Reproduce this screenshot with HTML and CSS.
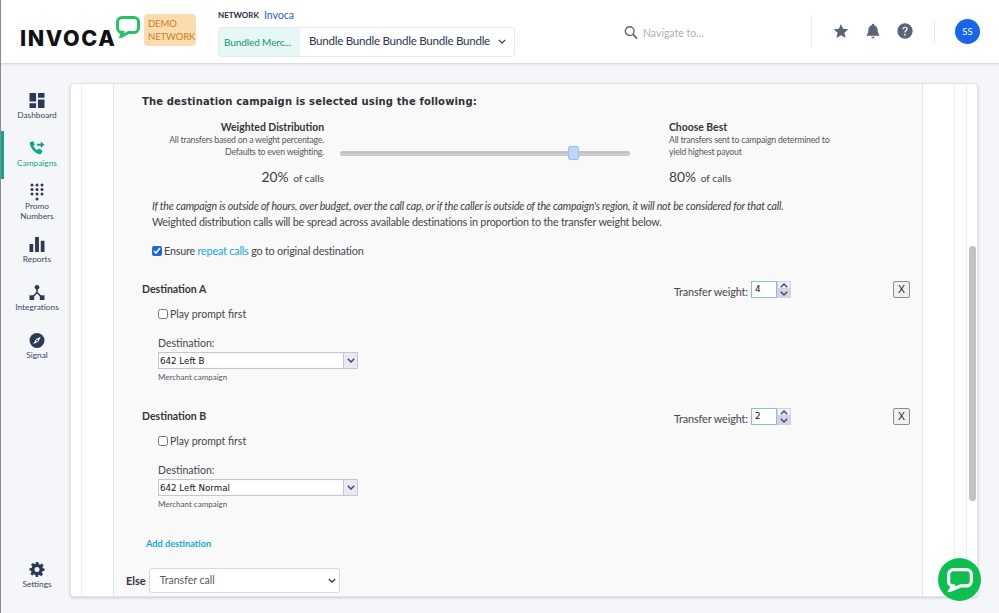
FILE: index.html
```html
<!DOCTYPE html>
<html lang="en">
<head>
<meta charset="utf-8">
<title>Invoca</title>
<link rel="stylesheet" href="styles.css">
</head>
<body>
<header class="topbar">
  <div class="logo">
    <span class="logo-text">INVOCA</span>
    <svg class="logo-bubble" viewBox="0 0 24 22"><path d="M6 1.500h12a4.500 4.500 0 0 1 4.500 4.500v6a4.500 4.500 0 0 1-4.500 4.500h-5.500L5 20.500l1.500-4A4.500 4.500 0 0 1 1.500 12V6A4.500 4.500 0 0 1 6 1.500z" fill="none" stroke="#27c16a" stroke-width="3"/></svg>
  </div>
  <div class="demo">DEMO NETWORK</div>
  <div class="network">
    <div class="network-line"><b>NETWORK</b><a>Invoca</a></div>
    <div class="bundle">
      <span class="bundle-tag">Bundled Merc...</span>
      <span class="bundle-name">Bundle Bundle Bundle Bundle Bundle</span>
      <svg class="bundle-chevron" viewBox="0 0 10 6"><path d="M1 1l4 4 4-4" fill="none" stroke="#2a3550" stroke-width="1.500"/></svg>
    </div>
  </div>
  <div class="search">
    <svg viewBox="0 0 16 16"><circle cx="6.500" cy="6.500" r="5" fill="none" stroke="#5b6577" stroke-width="1.600"/><path d="M10.200 10.200L15 15" stroke="#5b6577" stroke-width="1.900"/></svg>
    <span>Navigate to...</span>
  </div>
  <div class="tools">
    <svg class="tool" viewBox="0 0 24 24"><path d="M12 1.500l3.200 7.300 7.800.7-5.900 5.200 1.800 7.800L12 18.400l-6.900 4.100 1.800-7.800L1 9.500l7.800-.7z" fill="#5b6577"/></svg>
    <svg class="tool" viewBox="0 0 24 24"><path d="M12 1a2 2 0 0 1 2 2v.400c3.200 1 5 3.800 5 7.100 0 4 1 5.500 2.500 7V19h-19v-1.500C4 16 5 14.500 5 10.500c0-3.300 1.800-6.100 5-7.100V3a2 2 0 0 1 2-2z M9.500 20.500h5a2.500 2.500 0 0 1-5 0z" fill="#5b6577"/></svg>
    <svg class="tool" viewBox="0 0 24 24"><circle cx="12" cy="12" r="11.500" fill="#5b6577"/><path d="M8 9.200c0-2.300 1.800-3.700 4-3.700s4 1.300 4 3.400c0 2.800-3.200 2.900-3.200 5.400h-1.900c0-3.400 3-3.400 3-5.300 0-1-.8-1.700-1.900-1.700s-2 .7-2.100 1.900z" fill="#fff"/><circle cx="11.900" cy="17.500" r="1.300" fill="#fff"/></svg>
  </div>
  <div class="divider"></div>
  <div class="avatar">SS</div>
</header>

<div class="main">
  <nav class="sidebar">
    <a class="nav-item">
      <svg viewBox="0 0 16 16"><path d="M0 0h7v9H0zM9 0h7v5H9zM9 7h7v9H9zM0 11h7v5H0z" fill="#2d3a55"/></svg>
      <span>Dashboard</span>
    </a>
    <a class="nav-item active">
      <svg viewBox="0 0 16 16"><path d="M1 1l3-.800 1.800 3.700-1.600 1.400c.8 2 2.300 3.500 4.300 4.400l1.500-1.600 3.700 1.800-.7 3c-.2.800-1 1.300-2 1.100C5.500 12.800 1.600 8.500.4 2.800.2 2 .4 1.200 1 1z" fill="#12a587"/><path d="M8 3h4V.500L16 4l-4 3.500V5H8z" fill="#12a587"/></svg>
      <span>Campaigns</span>
    </a>
    <a class="nav-item tall">
      <svg viewBox="0 0 14 18"><g fill="#2d3a55"><circle cx="2" cy="2" r="1.500"/><circle cx="7" cy="2" r="1.500"/><circle cx="12" cy="2" r="1.500"/><circle cx="2" cy="6.500" r="1.500"/><circle cx="7" cy="6.500" r="1.500"/><circle cx="12" cy="6.500" r="1.500"/><circle cx="2" cy="11" r="1.500"/><circle cx="7" cy="11" r="1.500"/><circle cx="12" cy="11" r="1.500"/><circle cx="7" cy="16" r="1.500"/></g></svg>
      <span>Promo<br>Numbers</span>
    </a>
    <a class="nav-item">
      <svg viewBox="0 0 14 14"><path d="M0 6.500h3.500V14H0zM5.200 0h3.600v14H5.200zM10.500 3.500H14V14h-3.500z" fill="#2d3a55"/></svg>
      <span>Reports</span>
    </a>
    <a class="nav-item">
      <svg viewBox="0 0 16 16"><g fill="#2d3a55"><circle cx="8" cy="2.500" r="2.500"/><rect x="0" y="11" width="5" height="5"/><rect x="11" y="11" width="5" height="5"/></g><path d="M8 3v5M8 8l-5 5M8 8l5 5" stroke="#2d3a55" stroke-width="1.600" fill="none"/></svg>
      <span>Integrations</span>
    </a>
    <a class="nav-item">
      <svg viewBox="0 0 16 16"><circle cx="8" cy="8" r="8" fill="#2d3a55"/><path d="M12 4L9.300 9.300 4 12l2.700-5.300z" fill="#fff"/><circle cx="8" cy="8" r="1" fill="#2d3a55"/></svg>
      <span>Signal</span>
    </a>
    <a class="nav-item settings">
      <svg viewBox="0 0 24 24"><path d="M10 0h4l.6 3.300 2.300 1 2.800-1.900 2.900 2.900-1.900 2.800 1 2.300L24 10v4l-3.300.6-1 2.300 1.900 2.800-2.900 2.900-2.800-1.900-2.300 1L14 24h-4l-.6-3.300-2.300-1-2.800 1.900-2.900-2.900 1.900-2.800-1-2.300L0 14v-4l3.300-.6 1-2.300-1.900-2.800 2.900-2.900 2.800 1.900 2.300-1zM12 8a4 4 0 1 0 0 8 4 4 0 0 0 0-8z" fill="#2d3a55" fill-rule="evenodd"/></svg>
      <span>Settings</span>
    </a>
  </nav>

  <section class="card">
    <div class="rail-a"></div>
    <div class="rail-b"></div>
    <div class="panel">
      <h2>The destination campaign is selected using the following:</h2>
      <div class="split">
        <div class="split-left">
          <h3>Weighted Distribution</h3>
          <p>All transfers based on a weight percentage.<br>Defaults to even weighting.</p>
          <div class="pct"><strong>20%</strong> of calls</div>
        </div>
        <div class="slider"><div class="track"><div class="handle"></div></div></div>
        <div class="split-right">
          <h3>Choose Best</h3>
          <p>All transfers sent to campaign determined to<br>yield highest payout</p>
          <div class="pct"><strong>80%</strong> of calls</div>
        </div>
      </div>
      <div class="notes">
        <p class="note-italic">If the campaign is outside of hours, over budget, over the call cap, or if the caller is outside of the campaign's region, it will not be considered for that call.</p>
        <p>Weighted distribution calls will be spread across available destinations in proportion to the transfer weight below.</p>
      </div>
      <label class="ensure"><input type="checkbox" checked> <span>Ensure <a>repeat calls</a> go to original destination</span></label>

      <div class="dest">
        <div class="dest-main">
          <h4>Destination A</h4>
          <label class="prompt"><input type="checkbox"> <span>Play prompt first</span></label>
          <div class="dest-label">Destination:</div>
          <div class="combo"><span class="combo-value">642 Left B</span><span class="combo-btn"><svg viewBox="0 0 8 5"><path d="M.8.800L4 4l3.200-3.200" fill="none" stroke="#2b4c8c" stroke-width="1.500"/></svg></span></div>
          <div class="hint">Merchant campaign</div>
        </div>
        <div class="weight">
          <span>Transfer weight:</span>
          <span class="num">4</span>
          <span class="spin"><i><svg viewBox="0 0 8 5"><path d="M.8 4.200L4 1l3.200 3.200" fill="none" stroke="#2b4c8c" stroke-width="1.400"/></svg></i><i class="down"><svg viewBox="0 0 8 5"><path d="M.8.800L4 4l3.200-3.200" fill="none" stroke="#2b4c8c" stroke-width="1.400"/></svg></i></span>
        </div>
        <button class="remove" type="button">X</button>
      </div>

      <div class="dest dest-b">
        <div class="dest-main">
          <h4>Destination B</h4>
          <label class="prompt"><input type="checkbox"> <span>Play prompt first</span></label>
          <div class="dest-label">Destination:</div>
          <div class="combo"><span class="combo-value">642 Left Normal</span><span class="combo-btn"><svg viewBox="0 0 8 5"><path d="M.8.800L4 4l3.200-3.200" fill="none" stroke="#2b4c8c" stroke-width="1.500"/></svg></span></div>
          <div class="hint">Merchant campaign</div>
        </div>
        <div class="weight">
          <span>Transfer weight:</span>
          <span class="num">2</span>
          <span class="spin"><i><svg viewBox="0 0 8 5"><path d="M.8 4.200L4 1l3.200 3.200" fill="none" stroke="#2b4c8c" stroke-width="1.400"/></svg></i><i class="down"><svg viewBox="0 0 8 5"><path d="M.8.800L4 4l3.200-3.200" fill="none" stroke="#2b4c8c" stroke-width="1.400"/></svg></i></span>
        </div>
        <button class="remove" type="button">X</button>
      </div>

      <a class="add">Add destination</a>
      <div class="else">
        <b>Else</b>
        <div class="select"><span>Transfer call</span><svg viewBox="0 0 10 6"><path d="M1 1l4 4 4-4" fill="none" stroke="#3a4252" stroke-width="1.700"/></svg></div>
      </div>
    </div>
    <div class="rail-c"></div>
    <div class="scroll"><div class="thumb"></div></div>
  </section>
</div>

<a class="chat">
  <svg viewBox="0 0 24 22"><path d="M6 1.500h12a4.500 4.500 0 0 1 4.500 4.500v6a4.500 4.500 0 0 1-4.500 4.500h-5.500L3 20.500l2.500-4A4.500 4.500 0 0 1 1.500 12V6A4.500 4.500 0 0 1 6 1.500z" fill="none" stroke="#fff" stroke-width="3"/></svg>
</a>
</body>
</html>
```
FILE: styles.css
```css
* { box-sizing: border-box; }
html, body { margin: 0; height: 613px; overflow: hidden; }
body {
  font-family: Lato, "Liberation Sans", sans-serif;
  color: #3b3f47;
  background: #f4f6fa;
  border-left: 1px solid #8a8a8a;
}
h2, h3, h4, p { margin: 0; }

.topbar {
  height: 64px;
  background: #fff;
  border-bottom: 1px solid #d9dbe0;
  box-shadow: 0 1px 2px rgba(0,0,0,.08);
  display: flex;
  align-items: flex-start;
  padding-left: 19px;
  position: relative;
  z-index: 2;
}
.logo { width: 124px; height: 46px; margin-top: 14px; display: flex; align-items: flex-start; flex: none; }
.logo-text {
  font-family: Inter, "Liberation Sans", sans-serif;
  font-weight: 800;
  font-size: 21.5px;
  letter-spacing: 1.6px;
  color: #111;
  line-height: 20px;
  margin-top: 14px;
}
.logo-bubble { width: 24px; height: 22px; margin-top: 2px; }
.demo {
  width: 52px; height: 32px; margin-top: 14px; flex: none;
  background: #fcdcae; border-radius: 4px;
  color: #c4801f; font-size: 9.500px; letter-spacing: -.1px; line-height: 13px;
  padding: 3px 0 0 4px;
}
.network { margin-left: 22px; width: 297px; margin-top: 7px; flex: none; }
.network-line { height: 16px; margin-bottom: 4px; display: flex; align-items: center; gap: 5px; }
.network-line b { font-size: 8px; color: #1e2a44; font-weight: 700; }
.network-line a { font-size: 10.500px; color: #1a5fe0; }
.bundle {
  height: 30px; display: flex; align-items: center;
  border: 1px solid #e8eaee; border-radius: 3px;
}
.bundle-tag {
  width: 81px; height: 100%; background: #e6f8f5; color: #1d8d78; flex: none; white-space: nowrap;
  font-size: 10px; letter-spacing: -.1px; display: flex; align-items: center; padding: 0 0 1px 5px;
}
.bundle-name { margin: 0 0 3px 9px; font-size: 11.600px; letter-spacing: -.27px; color: #2a3550; white-space: nowrap; }
.bundle-chevron { width: 8px; height: 5px; margin: 0 0 2px 8px; flex: none; }
.search { margin-left: 109px; margin-top: 25px; display: flex; align-items: center; gap: 5px; width: 187px; height: 15px; flex: none; }
.search svg { width: 14px; height: 15px; }
.search span { font-size: 10.500px; color: #a9b0bb; }
.tools {
  height: 32px; margin-top: 15px; padding-left: 21px; flex: none;
  border-left: 1px solid #e8eaee; display: flex; align-items: center; gap: 16px; width: 123px;
}
.tool { width: 16px; height: 16px; flex: none; }
.divider { width: 1px; height: 24px; margin-top: 20px; background: #e8eaee; flex: none; }
.avatar {
  width: 25px; height: 25px; border-radius: 50%; background: #1765e8; color: #fff; flex: none;
  font-size: 9.500px; display: flex; align-items: center; justify-content: center;
  margin-top: 19px; margin-left: 20px;
}

.main { display: flex; height: 549px; }
.sidebar { width: 69px; display: flex; flex-direction: column; padding-top: 19px; flex: none; }
.nav-item {
  height: 48px; display: flex; flex-direction: column; align-items: center; padding-top: 10px;
  color: #3d4860; font-size: 8.300px; line-height: 9.500px; text-align: center; gap: 3px; flex: none;
  border-left: 3px solid transparent;
}
.nav-item svg { width: 16px; height: 15px; flex: none; }
.nav-item.tall { padding-top: 4px; gap: 1px; }
.nav-item.tall svg { height: 18px; }
.nav-item.active { color: #12a587; border-left-color: #12a587; }
.nav-item.settings { margin-top: auto; margin-bottom: 13px; }

.card {
  width: 908px; height: 514px; margin-top: 19px; background: #fff;
  border: 1px solid #e3e4e7; border-radius: 4px; box-shadow: 0 1px 3px rgba(0,0,0,.18);
  display: flex; overflow: hidden; flex: none;
}
.rail-a { width: 11px; border-right: 1px solid #ececec; flex: none; }
.rail-b { width: 32px; border-right: 1px solid #e4e4e4; flex: none; }
.panel { width: 808px; flex: none; background: #f9f9f9; padding: 10px 0 0 28px; }
.panel h2 {
  font-family: "DejaVu Sans", Verdana, sans-serif;
  font-size: 10px; font-weight: 700; color: #2e3238; line-height: 16px; letter-spacing: .15px;
}
.split { display: flex; margin-top: 10px; }
.split-left { width: 182px; text-align: right; flex: none; }
.split-right { width: 180px; margin-left: 39px; flex: none; }
.split h3 { font-size: 10.400px; font-weight: 700; color: #33363c; line-height: 14px; }
.split p { font-size: 8.700px; letter-spacing: -.2px; line-height: 12.400px; color: #55585e; }
.pct { font-size: 10.200px; color: #44474d; margin-top: 8px; line-height: 20px; }
.pct strong { font-weight: 400; font-size: 13.800px; color: #3b3e44; margin-right: 2px; }
.slider { width: 290px; margin-left: 16px; padding-top: 31px; flex: none; }
.track {
  height: 5px; border: 1px solid #c4c4c4; border-radius: 2px; position: relative;
  background: linear-gradient(#bdbdbd, #d6d6d6);
}
.handle {
  position: absolute; left: 227px; top: -6px; width: 11px; height: 14px;
  background: #bcd6fb; border: 1px solid #9cc0f2; border-radius: 2px;
}
.notes { margin: 11px 0 0 10px; font-size: 10.800px; letter-spacing: -.21px; line-height: 15px; color: #44474d; }
.note-italic { font-style: italic; font-size: 10.600px; letter-spacing: -.2px; color: #3b3e44; }
.ensure { display: flex; align-items: center; margin: 14px 0 0 10px; font-size: 10.800px; letter-spacing: -.2px; color: #44474d; height: 16px; }
.ensure a { color: #18a4e8; }
input[type=checkbox] { margin: 0 2px 0 0; width: 10px; height: 10px; accent-color: #1a6be0; flex: none; }
.dest { display: flex; align-items: flex-start; height: 127px; margin-top: 23px; }
.dest-b { margin-top: 0; }
.dest-main { width: 532px; flex: none; }
.dest h4 { font-size: 10.500px; font-weight: 700; color: #33363c; line-height: 14px; }
.prompt { display: flex; align-items: center; margin: 11px 0 0 16px; font-size: 10.500px; color: #44474d; height: 14px; }
.dest-label { margin: 15px 0 0 16px; font-size: 10.500px; line-height: 14px; color: #44474d; }
.combo {
  margin: 2px 0 0 16px; width: 200px; height: 17px; display: flex;
  border: 1px solid #c3c6d6; background: #fff; box-shadow: inset 0 0 1px #ccc;
}
.combo-value { flex: 1; font-family: "DejaVu Sans", sans-serif; font-size: 8.700px; line-height: 16px; color: #111; padding-left: 1px; }
.combo-btn { width: 14px; background: #e9e9ef; border-left: 1px solid #c3c6d6; display: flex; align-items: center; justify-content: center; }
.combo-btn svg { width: 8px; height: 5px; }
.hint { margin: 3px 0 0 16px; font-size: 8px; line-height: 10px; color: #55585e; }
.weight { display: flex; align-items: flex-start; margin-top: -1px; width: 219px; font-size: 10.800px; letter-spacing: -.1px; color: #44474d; line-height: 14px; flex: none; }
.weight > span:first-child { margin-top: 4px; width: 74px; white-space: nowrap; }
.num {
  width: 26px; height: 17px; margin-left: 3px; border: 1px solid #8fb7e8; background: #fff;
  font-family: "DejaVu Sans", sans-serif; font-size: 8.800px; line-height: 15px; color: #111; padding-left: 3px;
}
.spin { width: 14px; height: 17px; display: flex; flex-direction: column; }
.spin i { height: 8.500px; display: flex; align-items: center; justify-content: center; background: #f1f1f3; border: 1px solid #d3d5da; }
.spin i.down { background: #d5d6da; }
.spin svg { width: 8px; height: 5px; }
.remove {
  width: 17px; height: 17px; padding: 0; margin-top: -1px; flex: none;
  font-family: "Liberation Sans", sans-serif; font-size: 10.500px; color: #222;
  background: #f0f0f0; border: 1px solid #8d8d8d; border-radius: 2px;
}
.add { display: block; margin: 2px 0 0 4px; font-size: 9.200px; font-weight: 700; color: #18a4e8; line-height: 12px; }
.else { display: flex; align-items: center; margin: 18px 0 0 -16px; gap: 3px; }
.else b { font-size: 11px; color: #33363c; }
.select {
  width: 191px; height: 25px; background: #fff; border: 1px solid #d6d8dc; border-radius: 3px;
  display: flex; align-items: center; justify-content: space-between; padding: 0 3px 0 10px;
  font-size: 10.500px; color: #55585e;
}
.select svg { width: 8px; height: 5px; }
.rail-c { width: 33px; border-left: 1px solid #e4e4e4; border-right: 1px solid #ececec; flex: none; }
.scroll { width: 11px; border-left: 1px solid #ececec; padding: 162px 1px 0 2px; margin-left: 11px; flex: none; }
.thumb { width: 7px; height: 255px; background: #c2c2c2; border-radius: 4px; }

.chat {
  position: fixed; left: 938px; top: 558px; width: 43px; height: 43px; border-radius: 50%;
  background: #0dbf4f; display: flex; align-items: center; justify-content: center; z-index: 3;
}
.chat svg { width: 26px; height: 24px; }
```
